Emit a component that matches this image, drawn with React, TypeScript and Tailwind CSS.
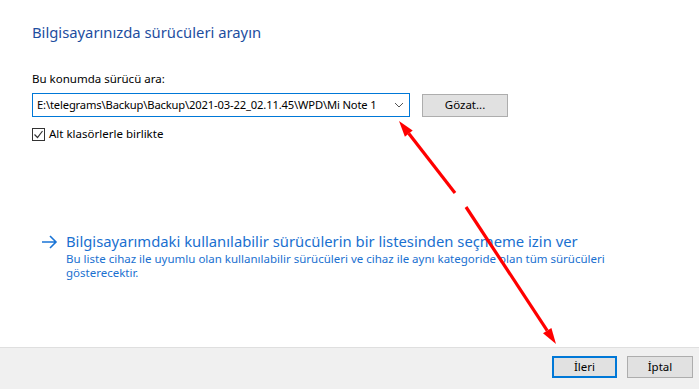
import React from 'react';

const font = { fontFamily: '"Noto Sans", "Open Sans", sans-serif' };

const App: React.FC = () => {
  return (
    <div className="relative w-[699px] h-[389px] bg-white flex flex-col overflow-hidden text-black" style={font}>
      {/* Main content */}
      <div className="flex-1 flex flex-col pl-[32px]">
        <h1 className="mt-[21px] text-[14.8px] leading-[22px] text-[#1e4e9f] font-normal">
          Bilgisayarınızda sürücüleri arayın
        </h1>

        <label className="mt-[28px] text-[11.5px] leading-[16px]">Bu konumda sürücü ara:</label>

        <div className="mt-[6px] flex items-center gap-[12px]">
          <div className="w-[378px] h-[24px] border border-[#0078d7] flex items-center pl-[4px] pr-[5px]">
            <span className="flex-1 text-[11.2px] tracking-[-0.15px] whitespace-nowrap overflow-hidden">
              E:\telegrams\Backup\Backup\2021-03-22_02.11.45\WPD\Mi Note 1
            </span>
            <svg width="10" height="6" viewBox="0 0 10 6" className="ml-[3px]">
              <path d="M1 1l4 4 4-4" fill="none" stroke="#555" strokeWidth="1" />
            </svg>
          </div>
          <button className="w-[86px] h-[23px] bg-[#e1e1e1] border border-[#adadad] text-[11.5px] leading-none">
            Gözat...
          </button>
        </div>

        <div className="mt-[9px] flex items-center gap-[4px]">
          <div className="w-[13px] h-[13px] border border-[#333] flex items-center justify-center">
            <svg width="11" height="11" viewBox="0 0 11 11">
              <path d="M1.5 5.5l3 3 5-6.5" fill="none" stroke="#333" strokeWidth="1.2" />
            </svg>
          </div>
          <span className="text-[11.5px] leading-[16px]">Alt klasörlerle birlikte</span>
        </div>

        <div className="mt-[88px] flex items-start gap-[8px] pl-[9px]">
          <svg width="17" height="14" viewBox="0 0 17 14" className="mt-[5px]">
            <path d="M1 7h14M9 1l6 6-6 6" fill="none" stroke="#1a74d6" strokeWidth="1.6" />
          </svg>
          <div className="flex flex-col text-[#1a70d0]">
            <span className="text-[14.8px] leading-[22px]">
              Bilgisayarımdaki kullanılabilir sürücülerin bir listesinden seçmeme izin ver
            </span>
            <span className="text-[11.5px] leading-[14px] w-[540px]">
              Bu liste cihaz ile uyumlu olan kullanılabilir sürücüleri ve cihaz ile aynı kategoride olan tüm sürücüleri gösterecektir.
            </span>
          </div>
        </div>
      </div>

      {/* Footer */}
      <div className="h-[42px] bg-[#f0f0f0] border-t border-[#dfdfdf] flex items-start justify-end gap-[10px] pr-[6px] pt-[8px]">
        <button className="w-[65px] h-[22px] bg-[#e1e1e1] border-2 border-[#0078d7] text-[11.5px] leading-none">
          İleri
        </button>
        <button className="w-[66px] h-[22px] bg-[#e1e1e1] border border-[#adadad] text-[11.5px] leading-none">
          İptal
        </button>
      </div>

      {/* Red annotation arrows */}
      <svg className="absolute inset-0 pointer-events-none" width="699" height="389" viewBox="0 0 699 389">
        <line x1="455" y1="193" x2="408.8" y2="133.6" stroke="#ff0000" strokeWidth="3.2" />
        <polygon points="399,121 412.7,130.5 404.9,136.7" fill="#ff0000" />
        <line x1="466" y1="207" x2="547.2" y2="330.6" stroke="#ff0000" strokeWidth="3.2" />
        <polygon points="556,344 551.4,327.9 543,333.3" fill="#ff0000" />
      </svg>
    </div>
  );
};

export default App;
